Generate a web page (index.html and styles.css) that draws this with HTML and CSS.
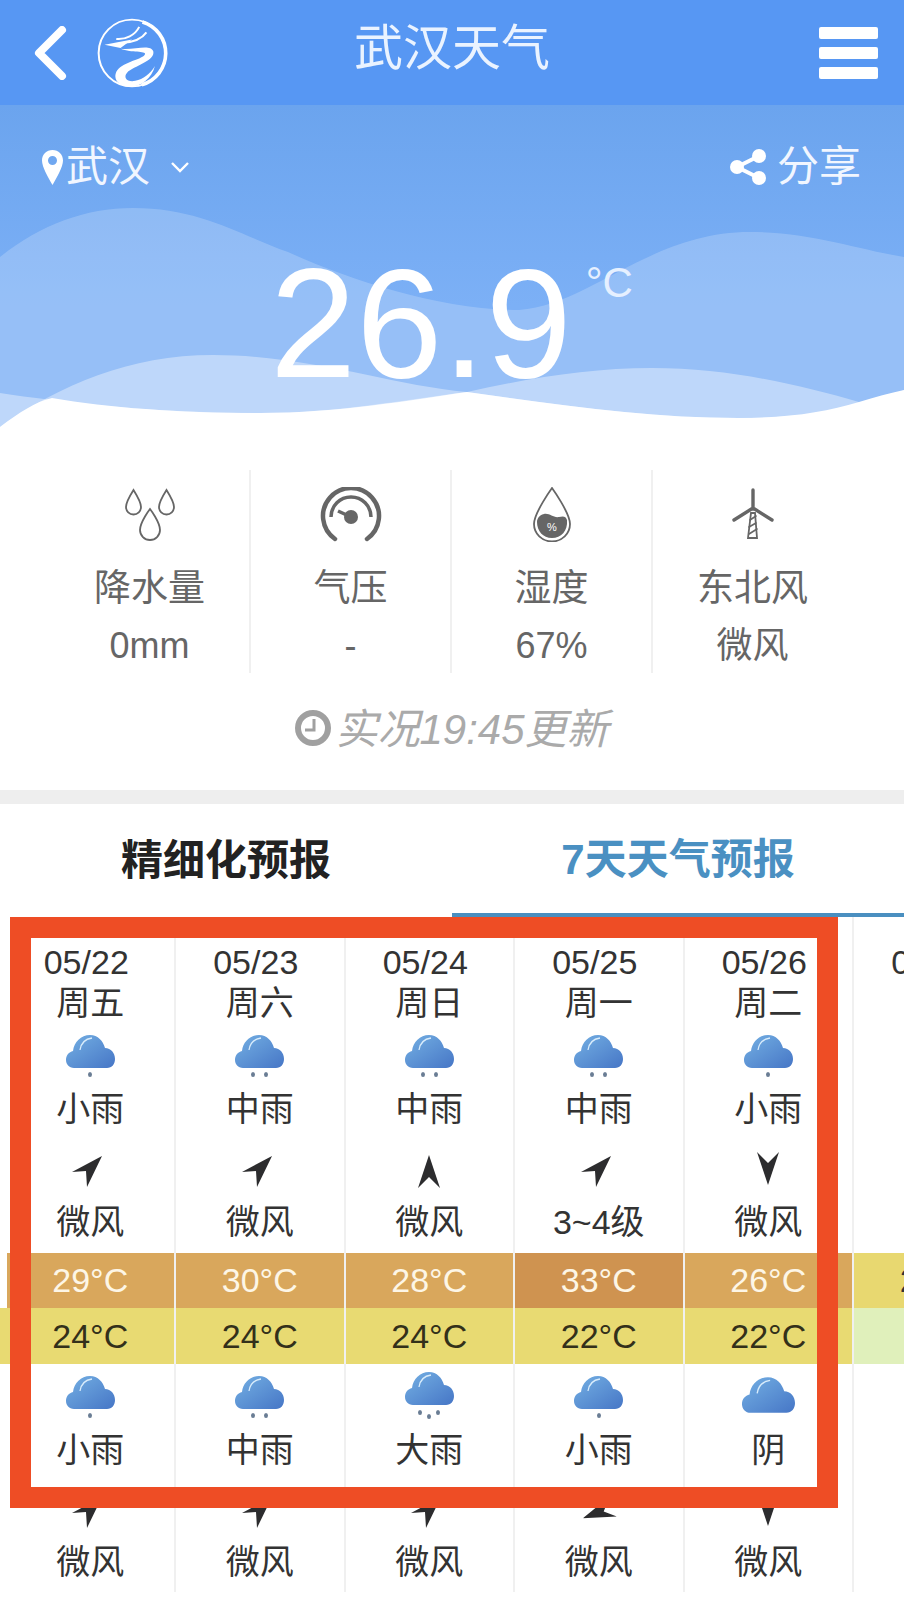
FILE: index.html
```html
<!DOCTYPE html>
<html lang="zh-CN">
<head>
    <title>武汉天气</title>
    <meta charset="UTF-8">
    <link rel="stylesheet" href="styles.css">
</head>
<body>
    <svg class="defs" width="0" height="0">
        <defs>
            <linearGradient id="cloudFill" x1="0" y1="0" x2="1" y2="1">
                <stop offset="0" stop-color="#74b0e3"/>
                <stop offset="1" stop-color="#4676c6"/>
            </linearGradient>
            <symbol id="cloud" viewBox="0 0 49 33">
                <path d="M8 33C3 33 0 29 0 25C0 20 3 17 7 16C8 7 15 0 24 0C32 0 37 6 39 13C45 13 49 18 49 24C49 29 46 33 41 33Z" fill="url(#cloudFill)"/>
                <path d="M14 15C15 8 19 4 26 3" fill="none" stroke="#d8ecfb" stroke-width="1.3"/>
            </symbol>
            <symbol id="arrow-ne" viewBox="0 0 30 31">
                <path d="M30 0L0 16L14 15L15 31Z" fill="#2c2c2e"/>
            </symbol>
            <symbol id="arrow-n" viewBox="0 0 22 33">
                <path d="M11 0L0 33L11 22L22 33Z" fill="#2c2c2e"/>
            </symbol>
        </defs>
    </svg>

    <header class="topbar">
        <div class="topbar-left">
            <svg class="back" viewBox="0 0 34 54"><path d="M29 4L6 27L29 50" fill="none" stroke="#fff" stroke-width="8" stroke-linecap="round" stroke-linejoin="round"/></svg>
            <svg class="logo" viewBox="230 15 220 220">
                <circle cx="340" cy="125" r="102" fill="none" stroke="#fff" stroke-width="6"/>
                <path d="M372 30A100 100 0 0 1 370 222" fill="none" stroke="#fff" stroke-width="11"/>
                <path d="M256 100L340 84L305 110Z" fill="#fff"/>
                <path d="M292 82C320 85 350 70 362 45M312 94C340 92 370 82 384 62" fill="none" stroke="#fff" stroke-width="6"/>
                <path d="M305 112C345 118 395 95 405 120C412 150 345 165 325 185C312 200 325 215 350 210C375 205 395 190 410 165C400 205 365 230 330 228C295 226 280 200 295 178C315 150 375 145 380 128C382 118 340 125 305 112Z" fill="#fff"/>
            </svg>
        </div>
        <h1 class="title">武汉天气</h1>
        <div class="menu"><span></span><span></span><span></span></div>
    </header>

    <section class="hero">
        <svg class="waves" viewBox="0 105 904 335">
            <path d="M0 257C40 225 85 208 133 208C200 208 240 235 288 252C350 280 440 310 519 310C590 305 650 232 750 232C810 232 860 250 904 257V440H0Z" fill="#fff" fill-opacity=".2"/>
            <path d="M0 427C60 385 130 355 213 355C310 355 390 385 467 392C560 405 650 418 738 418C800 418 860 410 904 390V440H0Z" fill="#fff" fill-opacity=".38"/>
            <path d="M0 393C60 402 150 413 260 413C340 413 400 400 467 392C530 378 590 368 652 368C730 368 800 385 859 402C875 407 890 412 904 420V440H0Z" fill="#fff" fill-opacity=".38"/>
            <path d="M0 427C20 412 35 402 52 398C110 408 180 413 260 413C340 413 410 400 467 392C560 405 650 418 738 418C790 418 825 412 859 402C875 397 890 393 904 390V440H0Z" fill="#fff"/>
        </svg>
        <div class="hero-row">
            <div class="city">
                <svg class="pin" viewBox="0 0 21 35"><path fill-rule="evenodd" d="M10.5 0C16.5 0 21 4.5 21 10.5C21 17 15 27 10.5 35C6 27 0 17 0 10.5C0 4.5 4.5 0 10.500 0ZM10.5 6A4.5 4.5 0 1 0 10.5 15A4.5 4.5 0 1 0 10.5 6Z" fill="#fff"/></svg>
                <span>武汉</span>
                <svg class="caret" viewBox="0 0 20 12"><path d="M2 2L10 10L18 2" fill="none" stroke="#fff" stroke-width="2.4"/></svg>
            </div>
            <div class="share">
                <svg class="share-icon" viewBox="0 0 37 36">
                    <path d="M29 7L7 18L29 29" fill="none" stroke="#fff" stroke-width="4"/>
                    <circle cx="29" cy="7" r="7" fill="#fff"/>
                    <circle cx="7" cy="18" r="7" fill="#fff"/>
                    <circle cx="29" cy="29" r="7" fill="#fff"/>
                </svg>
                <span>分享</span>
            </div>
        </div>
        <div class="temp">
            <span class="temp-value">26.9</span>
            <span class="temp-unit">°C</span>
        </div>
    </section>

    <section class="stats">
        <div class="stat">
            <svg class="stat-icon" width="50" height="55" viewBox="0 0 50 55">
                <g fill="none" stroke="#666" stroke-width="1.8">
                    <path d="M8.500 3C8.500 3 1 15 1 20A7.500 7.500 0 0 0 16 20C16 15 8.500 3 8.500 3Z"/>
                    <path d="M41.500 3C41.500 3 34 15 34 20A7.500 7.500 0 0 0 49 20C49 15 41.500 3 41.500 3Z"/>
                    <path d="M25 22C25 22 15 35 15 43A10 10 0 0 0 35 43C35 35 25 22 25 22Z"/>
                </g>
            </svg>
            <div class="stat-label">降水量</div>
            <div class="stat-value">0mm</div>
        </div>
        <div class="stat">
            <svg class="stat-icon" width="62" height="55" viewBox="0 0 62 55">
                <g fill="none" stroke="#666">
                    <path d="M15 52A28 28 0 1 1 47 52" stroke-width="4.5" stroke-linecap="round"/>
                    <path d="M11 30A20 20 0 0 1 51 30" stroke-width="3.5"/>
                    <path d="M18 24L31 30" stroke-width="3.5"/>
                </g>
                <circle cx="31" cy="30" r="7" fill="#666"/>
            </svg>
            <div class="stat-label">气压</div>
            <div class="stat-value">-</div>
        </div>
        <div class="stat">
            <svg class="stat-icon" width="38" height="55" viewBox="0 0 38 55">
                <path d="M19 1C19 1 1 26 1 37A18 17.500 0 0 0 37 37C37 26 19 1 19 1Z" fill="none" stroke="#666" stroke-width="1.8"/>
                <path d="M4 35C4 32 6 28 11 27C17 26 20 31 26 30C30 29 33 29 34 33C35 44 28 51 19 51C10 51 4 44 4 35Z" fill="#666"/>
                <text class="icon-percent" x="19" y="44">%</text>
            </svg>
            <div class="stat-label">湿度</div>
            <div class="stat-value">67%</div>
        </div>
        <div class="stat">
            <svg class="stat-icon" width="42" height="55" viewBox="0 0 42 55">
                <g fill="none" stroke="#666" stroke-linecap="round">
                    <path d="M21 3V22M21 21L2 33M21 21L40 33" stroke-width="3.4"/>
                    <path d="M19 26H23L25 51H16Z" stroke-width="1.8"/>
                    <path d="M18 33L24 29M17 40L24 36M17 47L25 42" stroke-width="1.6"/>
                </g>
            </svg>
            <div class="stat-label">东北风</div>
            <div class="stat-value">微风</div>
        </div>
    </section>

    <div class="update">
        <svg class="clock" viewBox="0 0 36 36">
            <circle cx="18" cy="18" r="15" fill="none" stroke="#a0a0a0" stroke-width="6"/>
            <path d="M19 9V20H10" fill="none" stroke="#a0a0a0" stroke-width="3"/>
        </svg>
        <span>实况19:45更新</span>
    </div>

    <div class="band"></div>

    <nav class="tabs">
        <div class="tab">精细化预报</div>
        <div class="tab tab-active">7天天气预报</div>
    </nav>

    <section class="forecast">
        <div class="day day-stub">
            <div class="row-top"></div>
            <div class="row-high row-empty"></div>
            <div class="row-low"></div>
        </div>

        <div class="day">
            <div class="row-top">
                <div class="date">05/22</div>
                <div class="line">周五</div>
                <div class="icon"><svg class="cloud"><use href="#cloud"/></svg><div class="drops"><i class="drop"></i></div></div>
                <div class="line">小雨</div>
                <div class="wind"><svg class="arrow"><use href="#arrow-ne"/></svg></div>
                <div class="line">微风</div>
            </div>
            <div class="row-high">29°C</div>
            <div class="row-low">24°C</div>
            <div class="icon"><svg class="cloud"><use href="#cloud"/></svg><div class="drops"><i class="drop"></i></div></div>
            <div class="line">小雨</div>
            <div class="wind"><svg class="arrow"><use href="#arrow-ne"/></svg></div>
            <div class="line">微风</div>
        </div>

        <div class="day">
            <div class="row-top">
                <div class="date">05/23</div>
                <div class="line">周六</div>
                <div class="icon"><svg class="cloud"><use href="#cloud"/></svg><div class="drops"><i class="drop"></i><i class="drop"></i></div></div>
                <div class="line">中雨</div>
                <div class="wind"><svg class="arrow"><use href="#arrow-ne"/></svg></div>
                <div class="line">微风</div>
            </div>
            <div class="row-high">30°C</div>
            <div class="row-low">24°C</div>
            <div class="icon"><svg class="cloud"><use href="#cloud"/></svg><div class="drops"><i class="drop"></i><i class="drop"></i></div></div>
            <div class="line">中雨</div>
            <div class="wind"><svg class="arrow"><use href="#arrow-ne"/></svg></div>
            <div class="line">微风</div>
        </div>

        <div class="day">
            <div class="row-top">
                <div class="date">05/24</div>
                <div class="line">周日</div>
                <div class="icon"><svg class="cloud"><use href="#cloud"/></svg><div class="drops"><i class="drop"></i><i class="drop"></i></div></div>
                <div class="line">中雨</div>
                <div class="wind"><svg class="arrow-up"><use href="#arrow-n"/></svg></div>
                <div class="line">微风</div>
            </div>
            <div class="row-high">28°C</div>
            <div class="row-low">24°C</div>
            <div class="icon icon-heavy"><svg class="cloud"><use href="#cloud"/></svg><div class="drops drops-heavy"><i class="drop"></i><i class="drop drop-low"></i><i class="drop"></i></div></div>
            <div class="line">大雨</div>
            <div class="wind"><svg class="arrow"><use href="#arrow-ne"/></svg></div>
            <div class="line">微风</div>
        </div>

        <div class="day">
            <div class="row-top">
                <div class="date">05/25</div>
                <div class="line">周一</div>
                <div class="icon"><svg class="cloud"><use href="#cloud"/></svg><div class="drops"><i class="drop"></i><i class="drop"></i></div></div>
                <div class="line">中雨</div>
                <div class="wind"><svg class="arrow"><use href="#arrow-ne"/></svg></div>
                <div class="line">3~4级</div>
            </div>
            <div class="row-high row-hot">33°C</div>
            <div class="row-low">22°C</div>
            <div class="icon"><svg class="cloud"><use href="#cloud"/></svg><div class="drops"><i class="drop"></i></div></div>
            <div class="line">小雨</div>
            <div class="wind"><svg class="arrow-wsw"><use href="#arrow-ne"/></svg></div>
            <div class="line">微风</div>
        </div>

        <div class="day">
            <div class="row-top">
                <div class="date">05/26</div>
                <div class="line">周二</div>
                <div class="icon"><svg class="cloud"><use href="#cloud"/></svg><div class="drops"><i class="drop"></i></div></div>
                <div class="line">小雨</div>
                <div class="wind"><svg class="arrow-up arrow-down"><use href="#arrow-n"/></svg></div>
                <div class="line">微风</div>
            </div>
            <div class="row-high">26°C</div>
            <div class="row-low">22°C</div>
            <div class="icon icon-overcast"><svg class="cloud"><use href="#cloud"/></svg></div>
            <div class="line">阴</div>
            <div class="wind"><svg class="arrow-up arrow-down"><use href="#arrow-n"/></svg></div>
            <div class="line">微风</div>
        </div>

        <div class="day">
            <div class="row-top">
                <div class="date">05/27</div>
            </div>
            <div class="row-high row-warm">28°C</div>
            <div class="row-low row-cool"></div>
        </div>

        <div class="frame"></div>
    </section>
</body>
</html>
```

FILE: styles.css
```css
* {
    box-sizing: border-box;
}

body {
    margin: 0;
    width: 904px;
    height: 1600px;
    overflow: hidden;
    background: #fff;
    font-family: "Liberation Sans", "Noto Sans CJK SC", sans-serif;
    color: #333;
}

.defs {
    position: absolute;
}

/* top bar */
.topbar {
    height: 105px;
    background: #5797f3;
    display: flex;
    align-items: center;
    justify-content: space-between;
    padding: 0 26px 0 33px;
    position: relative;
}

.topbar-left {
    display: flex;
    align-items: center;
    gap: 29px;
}

.back {
    width: 34px;
    height: 54px;
}

.logo {
    width: 72px;
    height: 72px;
}

.title {
    position: absolute;
    left: 354px;
    top: 22px;
    margin: 0;
    font-size: 49px;
    line-height: 52px;
    font-weight: 400;
    color: #eaf3ff;
}

.menu {
    display: flex;
    flex-direction: column;
    gap: 8px;
    width: 59px;
}

.menu span {
    height: 12px;
    background: #fff;
    border-radius: 2px;
}

/* hero */
.hero {
    position: relative;
    height: 335px;
    background: linear-gradient(#6ba4ee, #7cb0f6 60%);
    color: #fff;
}

.waves {
    position: absolute;
    left: 0;
    top: 0;
    width: 904px;
    height: 335px;
}

.hero-row {
    position: relative;
    display: flex;
    justify-content: space-between;
    align-items: center;
    padding: 41px 43px 0 42px;
    font-size: 42px;
    line-height: 42px;
    color: #f1f6ff;
}

.city,
.share {
    display: flex;
    align-items: center;
}

.pin {
    width: 21px;
    height: 35px;
    margin-right: 3px;
}

.caret {
    width: 20px;
    height: 12px;
    margin-left: 20px;
}

.share-icon {
    width: 37px;
    height: 36px;
    margin-right: 10px;
}

.temp {
    position: relative;
    display: flex;
    padding: 51px 0 0 270px;
}

.temp-value {
    font-size: 155px;
    line-height: 170px;
}

.temp-unit {
    font-size: 42px;
    line-height: 40px;
    margin: 24px 0 0 14px;
    color: #e6f0ff;
}

/* stats */
.stats {
    display: grid;
    grid-template-columns: repeat(4, 201px);
    height: 203px;
    margin: 30px 0 0 48px;
}

.stat {
    display: flex;
    flex-direction: column;
    align-items: center;
    padding-top: 17px;
    border-left: 2px solid #f0f0f0;
    color: #666;
}

.stat:first-child {
    border-left: 0;
    padding-left: 2px;
}

.stat-icon {
    display: block;
}

.icon-percent {
    font-size: 11px;
    fill: #fff;
    text-anchor: middle;
}

.stat-label {
    font-size: 37px;
    line-height: 42px;
    margin-top: 26px;
}

.stat-value {
    font-size: 36px;
    line-height: 42px;
    margin-top: 15px;
}

.update {
    display: flex;
    justify-content: center;
    align-items: center;
    gap: 4px;
    height: 48px;
    margin-top: 31px;
    font-size: 42px;
    font-style: italic;
    color: #aaa;
}

.update span {
    margin-bottom: 6px;
}

.clock {
    width: 36px;
    height: 36px;
}

.band {
    height: 14px;
    margin-top: 38px;
    background: #eee;
}

/* tabs */
.tabs {
    display: grid;
    grid-template-columns: 452px 452px;
    height: 113px;
}

.tab {
    display: flex;
    align-items: center;
    justify-content: center;
    padding-bottom: 8px;
    font-size: 42px;
    font-weight: 700;
    color: #222;
}

.tab-active {
    padding-bottom: 6px;
    color: #4a90c2;
    border-bottom: 4px solid #4a8fc0;
}

/* forecast table */
.forecast {
    position: relative;
    display: grid;
    grid-template-columns: 6.5px repeat(6, 169.5px);
    height: 675px;
    overflow: hidden;
    font-size: 34px;
    text-align: center;
}

.day {
    height: 675px;
    border-right: 2px solid #f0f0f0;
}

.day-stub {
    border-right: 0;
}

.row-top {
    height: 336px;
    padding-top: 25px;
}

.date {
    line-height: 41px;
    padding-right: 8px;
}

.line {
    line-height: 40px;
    white-space: nowrap;
}

.icon {
    height: 66px;
    padding-top: 12px;
    display: flex;
    flex-direction: column;
    align-items: center;
    gap: 4px;
}

.cloud {
    width: 49px;
    height: 33px;
    display: block;
}

.drops {
    display: flex;
    gap: 9px;
}

.drop {
    width: 4px;
    height: 5px;
    border-radius: 50%;
    background: #6a7d94;
}

.drops-heavy {
    gap: 5px;
}

.drop-low {
    margin-top: 4px;
}

.icon-heavy {
    padding-top: 8px;
    gap: 5px;
}

.icon-overcast {
    padding-top: 13px;
}

.icon-overcast .cloud {
    width: 53px;
    height: 36px;
}

.wind {
    height: 72px;
    padding-top: 12px;
    display: flex;
    align-items: center;
    justify-content: center;
}

.row-top .wind {
    height: 73px;
}

.arrow {
    width: 30px;
    height: 31px;
    margin-right: 6px;
}

.arrow-up {
    width: 22px;
    height: 33px;
}

.arrow-down {
    margin-top: -6px;
    transform: rotate(180deg);
}

.arrow-wsw {
    width: 30px;
    height: 31px;
    margin: -4px 0 0 8px;
    transform: rotate(205deg);
}

.row-high,
.row-low {
    height: 55px;
    line-height: 55px;
    white-space: nowrap;
}

.row-high {
    background: #d9a75c;
    color: #fdf6e6;
}

.row-empty {
    background: transparent;
}

.row-hot {
    background: #cf9350;
}

.row-warm {
    background: #e8d870;
    color: #333;
}

.row-low {
    height: 56px;
    line-height: 56px;
    background: #e8da72;
    color: #33301a;
}

.row-cool {
    background: #e0f0bb;
}

/* red highlight box drawn over the table */
.frame {
    position: absolute;
    left: 10px;
    top: 0;
    width: 828px;
    height: 591px;
    border: 21px solid #ee4d25;
}
```
